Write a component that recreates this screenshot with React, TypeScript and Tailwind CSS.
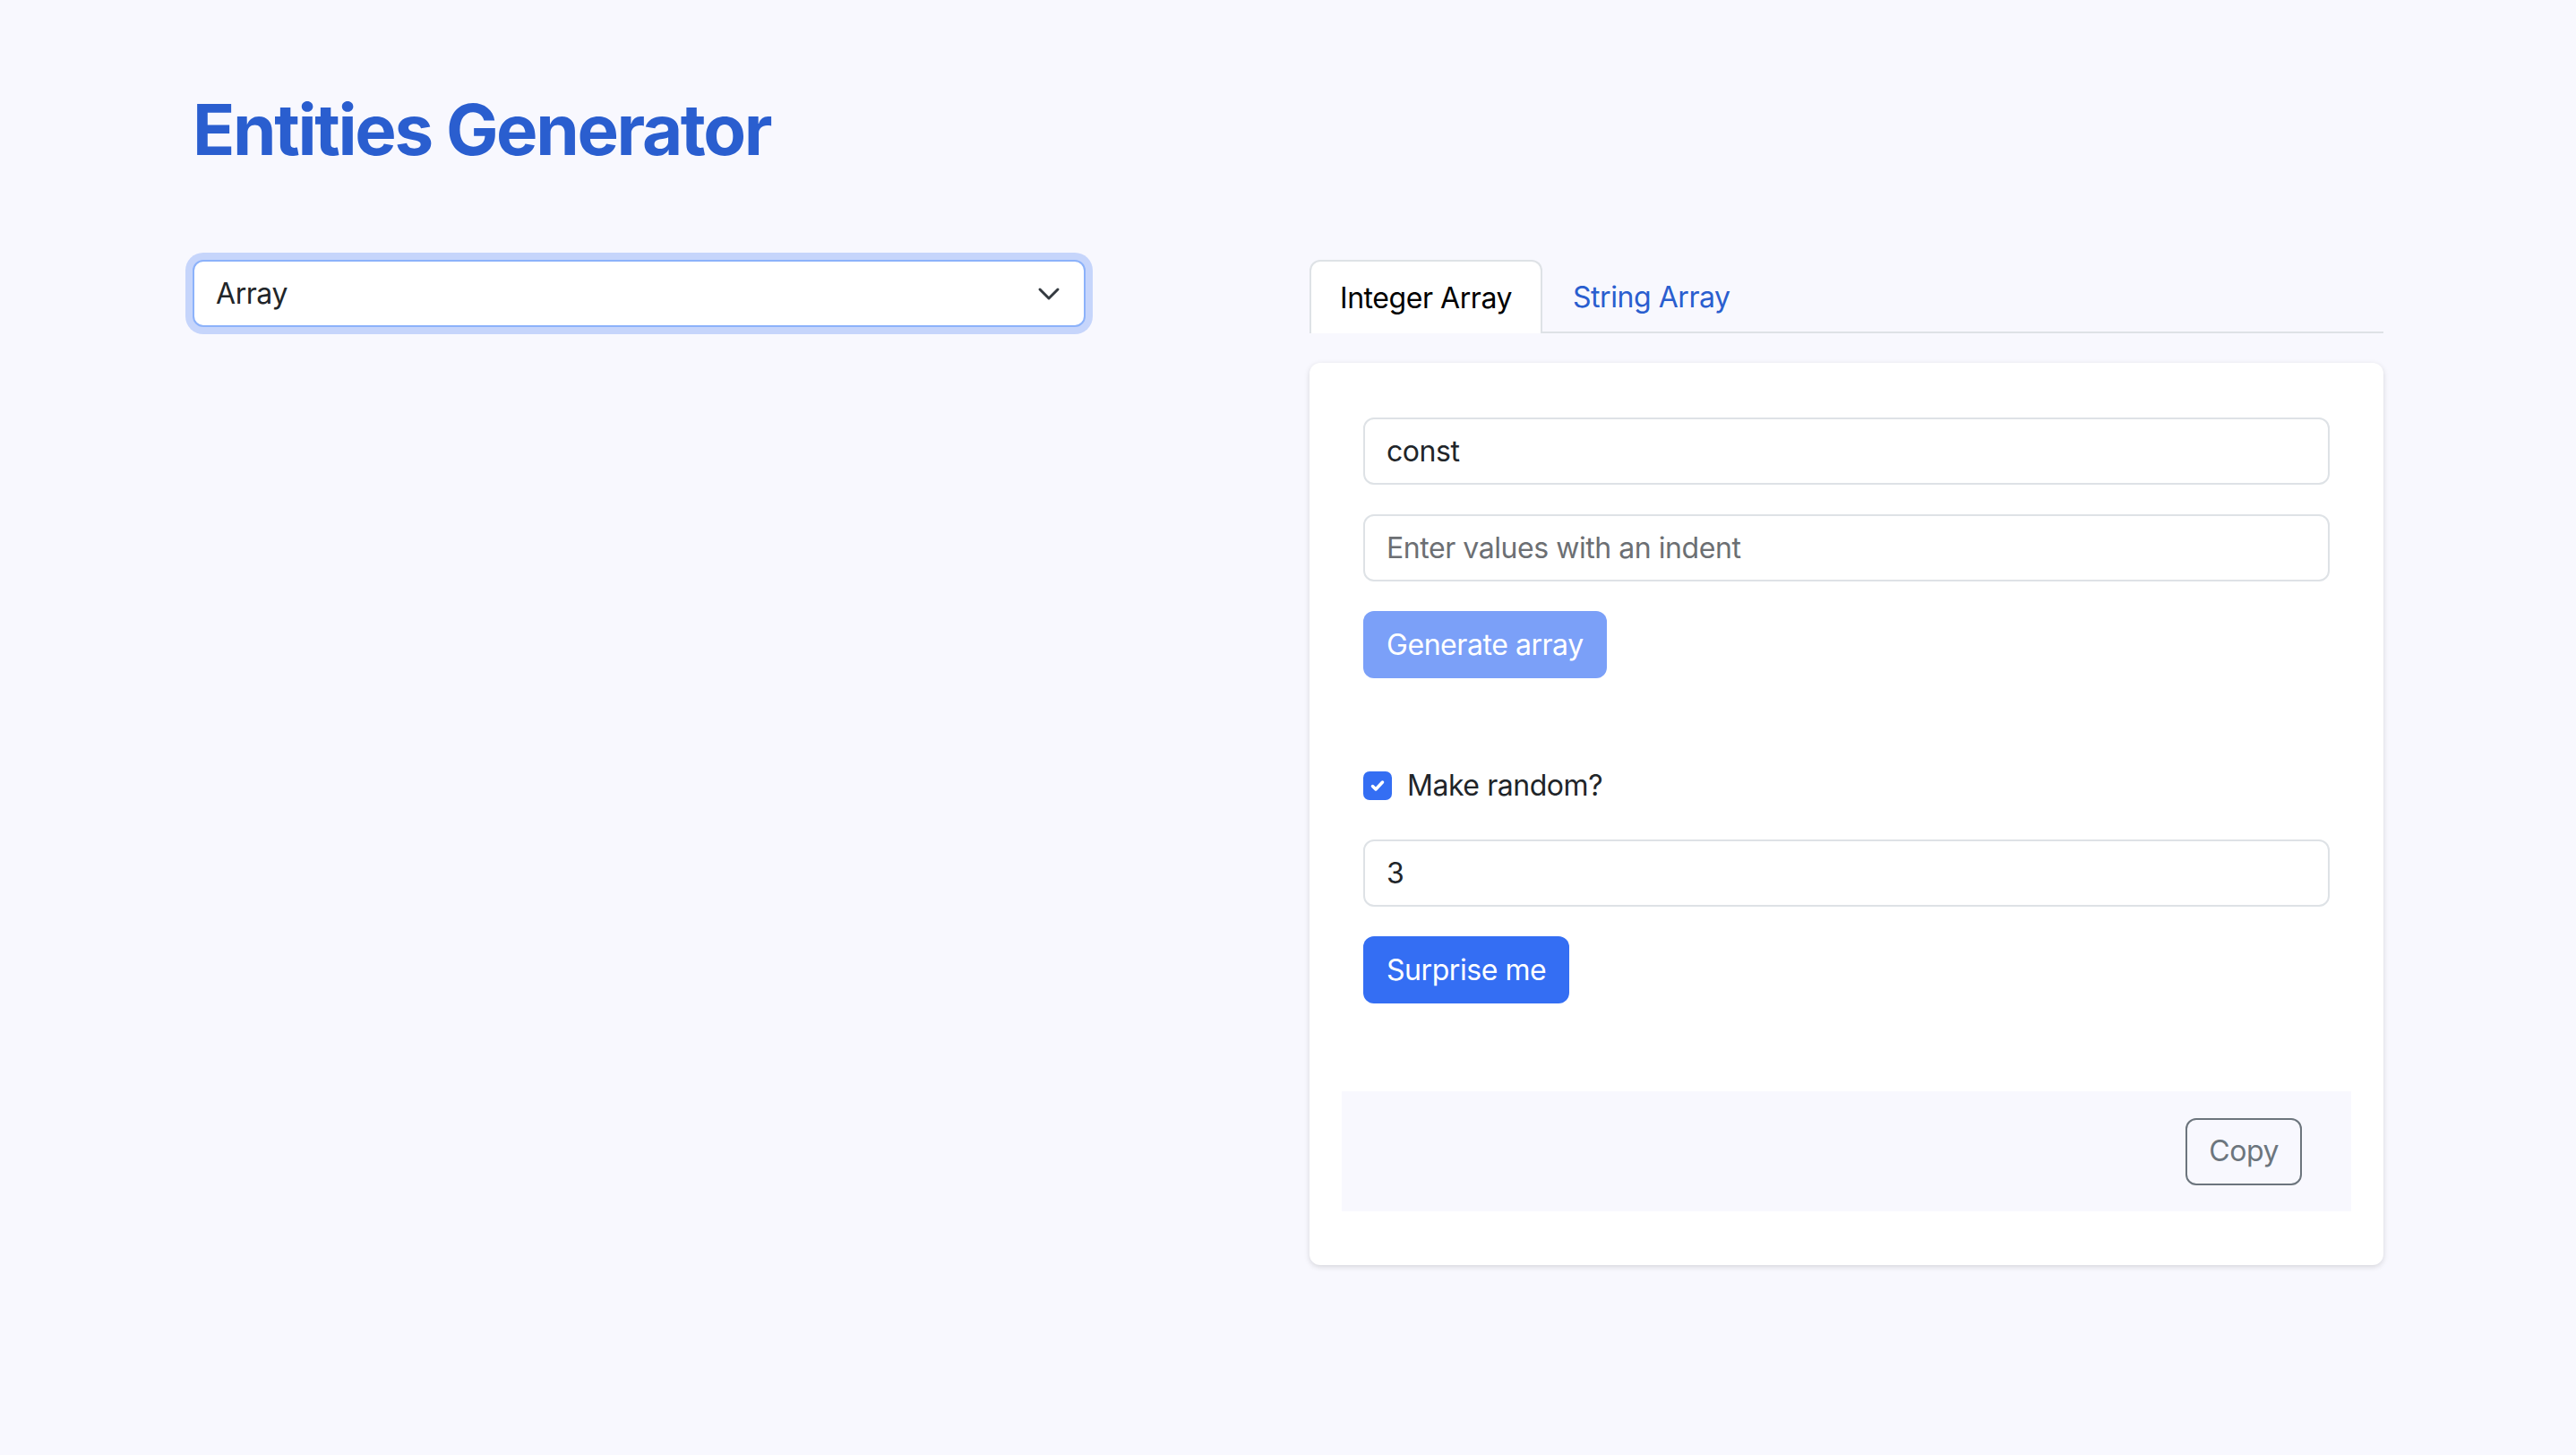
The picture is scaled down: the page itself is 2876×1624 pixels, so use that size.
import React, { useState } from 'react';

const inputCls =
  'block w-full h-[75px] rounded-[12px] border-2 border-[#dee2e6] bg-white px-[24px] text-[32px] text-[#212529] outline-none placeholder:text-[#6c6f73]';

export default function App() {
  const [tab, setTab] = useState<'int' | 'str'>('int');
  const [random, setRandom] = useState(true);
  const [name, setName] = useState('const');
  const [values, setValues] = useState('');
  const [count, setCount] = useState('3');

  return (
    <div className="min-h-screen bg-[#f8f8fe] font-['Inter',sans-serif] tracking-[-0.028em] text-[#212529]">
      <div className="pl-[215px] pt-[97px]">
        <h1 className="text-[78px] leading-[96px] font-bold tracking-[-0.03em] text-[#2a5ecf]">
          Entities Generator
        </h1>

        <div className="mt-[97px] flex items-start">
          {/* Left: entity type */}
          <div className="w-[997px]">
            <div className="flex h-[75px] items-center justify-between rounded-[12px] border-2 border-[#8cb2fa] bg-white pl-[24px] pr-[26px] ring-8 ring-[#c6d5fb]">
              <span className="text-[32px]">Array</span>
              <svg width="26" height="16" viewBox="0 0 26 16" fill="none">
                <path d="M3 3l10 10 10-10" stroke="#343a40" strokeWidth="3" strokeLinecap="round" strokeLinejoin="round" />
              </svg>
            </div>
          </div>

          {/* Right: generator */}
          <div className="ml-[250px] w-[1199px]">
            <div className="flex border-b-2 border-[#dee2e6]">
              <button
                onClick={() => setTab('int')}
                className={
                  tab === 'int'
                    ? '-mb-[2px] h-[82px] rounded-t-[12px] border-2 border-b-0 border-[#dee2e6] bg-white px-[32px] pt-[2px] text-[32px] text-black'
                    : '-mb-[2px] h-[82px] rounded-t-[12px] border-2 border-transparent px-[32px] pt-[2px] text-[32px] text-[#2a5ecf]'
                }
              >
                Integer Array
              </button>
              <button
                onClick={() => setTab('str')}
                className={
                  tab === 'str'
                    ? '-mb-[2px] h-[82px] rounded-t-[12px] border-2 border-b-0 border-[#dee2e6] bg-white px-[32px] pt-[2px] text-[32px] text-black'
                    : '-mb-[2px] h-[82px] rounded-t-[12px] border-2 border-transparent px-[32px] pt-[2px] text-[32px] text-[#2a5ecf]'
                }
              >
                String Array
              </button>
            </div>

            <div className="mt-[33px] rounded-[12px] bg-white px-[36px] pt-[61px] pb-[60px] shadow-[0_2px_6px_rgba(0,0,0,0.14)]">
              <div className="px-[24px]">
                <input className={inputCls} value={name} onChange={(e) => setName(e.target.value)} />
                <input
                  className={inputCls + ' mt-[33px]'}
                  placeholder="Enter values with an indent"
                  value={values}
                  onChange={(e) => setValues(e.target.value)}
                />
                <button className="mt-[33px] h-[75px] rounded-[12px] bg-[#7ba0f8] px-[26px] text-[32px] text-white">
                  Generate array
                </button>

                <label className="mt-[96px] flex h-[48px] items-center gap-[17px]">
                  <span
                    onClick={() => setRandom(!random)}
                    className={
                      random
                        ? 'flex h-[32px] w-[32px] items-center justify-center rounded-[7px] bg-[#346ef3]'
                        : 'flex h-[32px] w-[32px] items-center justify-center rounded-[7px] border-2 border-[#dee2e6] bg-white'
                    }
                  >
                    {random && (
                      <svg width="20" height="20" viewBox="0 0 20 20" fill="none">
                        <path d="M4.5 10.5l3.5 3.5 7.5-8" stroke="white" strokeWidth="3.5" strokeLinecap="round" strokeLinejoin="round" />
                      </svg>
                    )}
                  </span>
                  <span className="text-[32px]">Make random?</span>
                </label>

                <input
                  className={inputCls + ' mt-[36px]'}
                  value={count}
                  onChange={(e) => setCount(e.target.value)}
                />
                <button className="mt-[33px] h-[75px] rounded-[12px] bg-[#346ef3] px-[26px] text-[32px] text-white">
                  Surprise me
                </button>
              </div>

              <div className="mt-[98px] flex h-[134px] items-center justify-end bg-[#f8f8fe] pr-[55px]">
                <button className="h-[75px] rounded-[12px] border-2 border-[#6c757d] px-[24px] text-[32px] text-[#6c757d]">
                  Copy
                </button>
              </div>
            </div>
          </div>
        </div>
      </div>
    </div>
  );
}
